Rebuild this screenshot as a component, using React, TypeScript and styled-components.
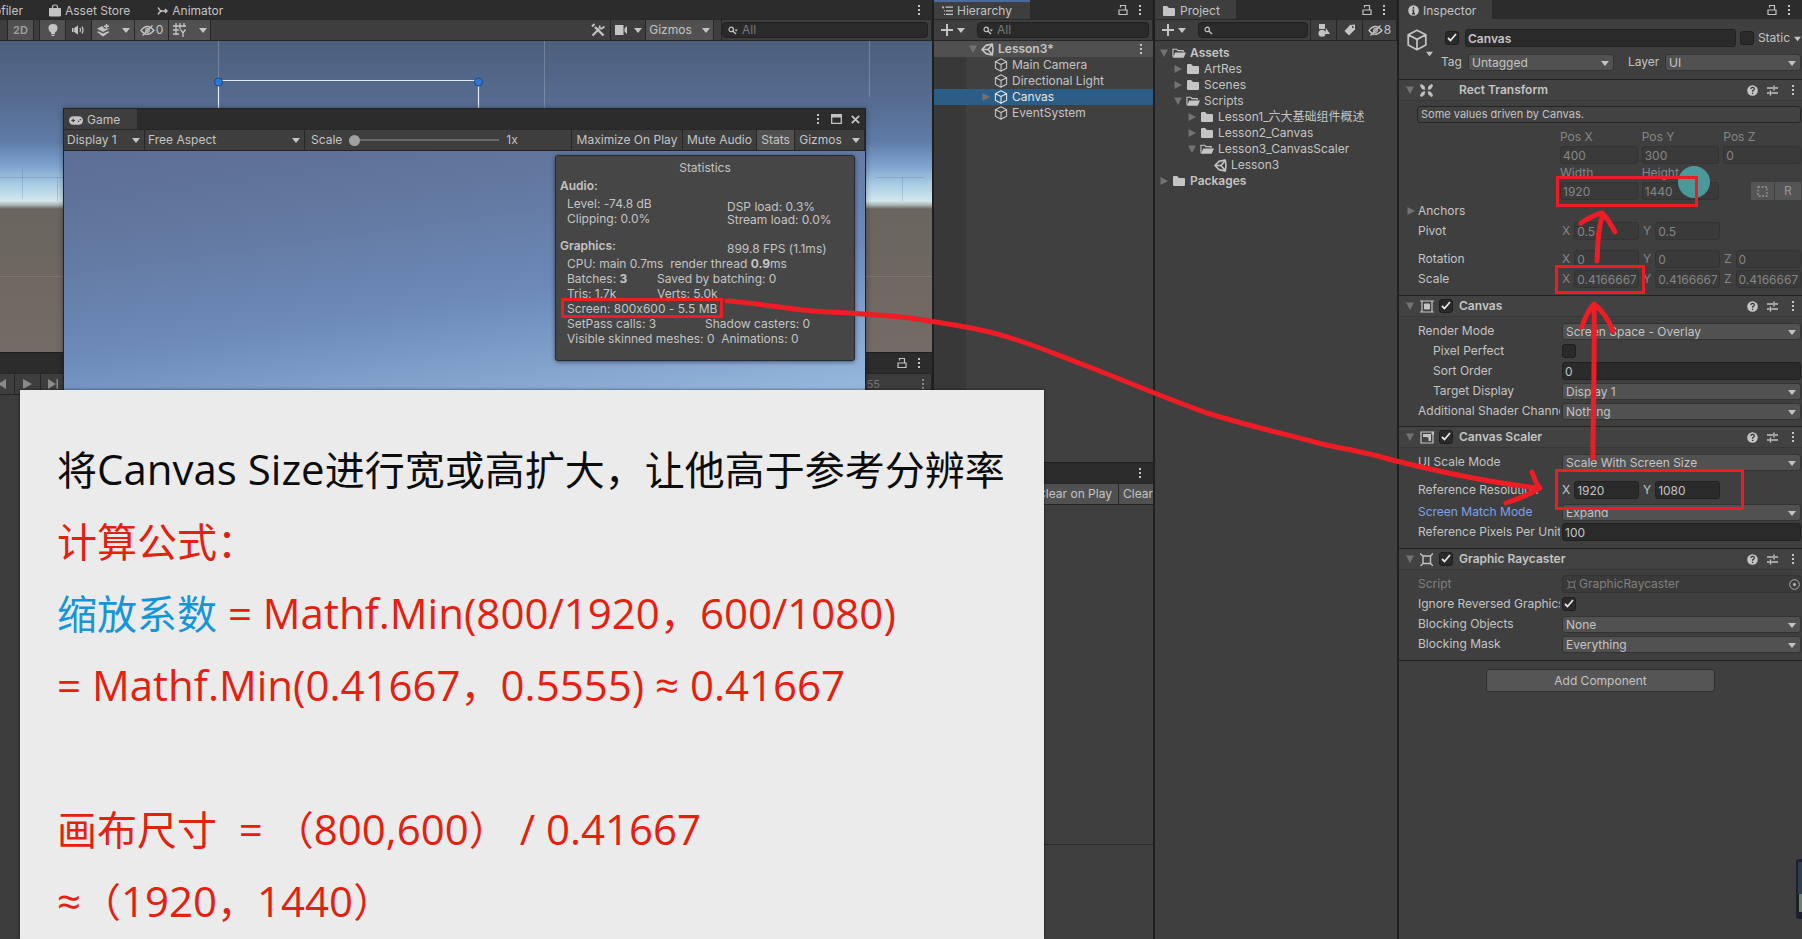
import React, { useId } from 'react';
import styled, { createGlobalStyle, css } from 'styled-components';

const GlobalStyle = createGlobalStyle`
  * { box-sizing: border-box; }
  body { margin: 0; background: #1f1f1f; }
  body, button, input, select {
    font-family: Inter, "Noto Sans CJK SC", sans-serif;
    font-size: 12px;
    line-height: 16px;
    font-feature-settings: "calt" 0;
    color: #c4c4c4;
  }
  button, input, select { margin: 0; padding: 0; border: 0; border-radius: 0; background: none; min-width: 0; }
`;

/* ---------- Icons ---------- */

const Svg = styled.svg`
  display: block;
  flex: none;
  fill: none;
  stroke: currentColor;
`;

const Caret = ({ size = 8 }: { size?: number }) => (
  <Svg width={size} height={size} viewBox="0 0 8 8" aria-hidden><path d="M0 2h8L4 7z" fill="currentColor" stroke="none" /></Svg>
);
const Kebab = () => (
  <Svg width="4" height="12" viewBox="0 0 4 12" aria-hidden>
    <path d="M1 1h2v2H1zM1 5h2v2H1zM1 9h2v2H1z" fill="currentColor" stroke="none" />
  </Svg>
);
const Lock = () => (
  <Svg width="10" height="12" viewBox="0 0 10 12" aria-hidden>
    <path d="M1 6h8v4.500H1zM2.500 3.500V1.500h5V6" strokeWidth="1.200" />
  </Svg>
);
const Cube = ({ size = 14 }: { size?: number }) => (
  <Svg width={size} height={size} viewBox="0 0 14 14" aria-hidden>
    <path d="M7 .8l5.6 2.9v6.5L7 13.2l-5.6-3V3.7zM1.4 3.7L7 6.6l5.6-2.9M7 6.6v6.6" strokeWidth="1.1" strokeLinejoin="round" />
  </Svg>
);
const UnityMark = () => (
  <Svg width="13" height="13" viewBox="0 0 13 13" aria-hidden>
    <path d="M11.3 1L5 2.4 1 6.5l4 4.1L11.3 12l.7-5.5zM7 6.5L10.8 2M7 6.5l3.8 4.5M7 6.5H1.6" strokeWidth="1.6" strokeLinejoin="round" />
  </Svg>
);
const Folder = () => (
  <Svg width="14" height="12" viewBox="0 0 14 12" aria-hidden>
    <path d="M1 2q0-1 1-1h3l2 2h5q1 0 1 1v6q0 1-1 1H2q-1 0-1-1z" fill="currentColor" stroke="none" />
  </Svg>
);
const FolderOpen = () => (
  <Svg width="14" height="12" viewBox="0 0 15 12" aria-hidden>
    <path d="M1 10V2h4l1.500 1.500H12V5" strokeWidth="1.200" />
    <path d="M3.500 5.500H15L12.500 11H.800z" fill="currentColor" stroke="none" />
  </Svg>
);
const Fold = ({ open }: { open: boolean }) => (
  <Svg width="8" height="8" viewBox="0 0 8 8" aria-hidden>
    <path d={open ? 'M0 .5h8L4 8z' : 'M.5 0v8L8 4z'} fill="#727272" stroke="none" />
  </Svg>
);
const Magnifier = ({ menu }: { menu?: boolean }) => (
  <Svg width="10" height="9" viewBox="0 0 10 9" aria-hidden>
    <circle cx="3.200" cy="3.400" r="2.200" strokeWidth="1.200" />
    <path d="M4.800 5L8 8" strokeWidth="1.400" />
    {menu && <path d="M6.500 3.500H10L8.200 5.600z" fill="currentColor" stroke="none" />}
  </Svg>
);
const Plus = () => (
  <Svg width="12" height="12" viewBox="0 0 12 12" aria-hidden><path d="M6 0v12M0 6h12" strokeWidth="2" /></Svg>
);
const Bag = () => (
  <Svg width="12" height="13" viewBox="0 0 12 13" aria-hidden>
    <path d="M.5 4.500h11V12H.500z" fill="currentColor" />
    <path d="M3.500 6V3q0-2 2.500-2t2.500 2v3" strokeWidth="1.200" />
  </Svg>
);
const AnimatorMark = () => (
  <Svg width="11" height="10" viewBox="0 0 11 10" aria-hidden>
    <path d="M1 1.500Q3 5 5 5h5M1 8.500Q3 5 5 5M8 3l2 2-2 2" strokeWidth="1.400" />
  </Svg>
);
const Bulb = () => (
  <Svg width="10" height="13" viewBox="0 0 10 13" aria-hidden>
    <path d="M5 0q4.500 0 4.500 4.200Q9.500 7 7 8.500V10H3V8.500Q.500 7 .500 4.200.500 0 5 0zM3.500 10.800h3V12h-3z" fill="currentColor" stroke="none" />
  </Svg>
);
const Speaker = () => (
  <Svg width="13" height="10" viewBox="0 0 13 10" aria-hidden>
    <path d="M0 3h1.500v4H0zM2.200 3L6 .500v9L2.200 7z" fill="currentColor" stroke="none" />
    <path d="M8 3q1 2 0 4M10 1.500q2 3.500 0 7" strokeWidth="1.200" />
  </Svg>
);
const Layers = () => (
  <Svg width="13" height="13" viewBox="0 0 13 13" aria-hidden>
    <path d="M0 4.500l5.500-2.500L7 4.500h5.500L6 8zM0 8l1.500-.800L6 9.500l5-2.300 1.500.800L6 12.500z" fill="currentColor" stroke="none" />
    <path d="M9.500 0v4.500M7 2.200h5" strokeWidth="1.400" />
  </Svg>
);
const EyeOff = () => (
  <Svg width="15" height="11" viewBox="0 0 15 11" aria-hidden>
    <path d="M1 5.500q6-8 13 0-7 7.500-13 0zM2.500 10.500l10-10" strokeWidth="1.300" />
    <circle cx="7.500" cy="5.500" r="1.800" strokeWidth="1.200" />
  </Svg>
);
const GridY = () => (
  <Svg width="14" height="14" viewBox="0 0 14 14" aria-hidden>
    <path d="M3 0v12M7 0v6M11 0v4M0 3h13M0 7h6M0 11h6M7.500 6.500l2.500 3.500 2.500-3.500M10 10v4" strokeWidth="1.300" />
  </Svg>
);
const Tools = () => (
  <Svg width="14" height="14" viewBox="0 0 14 14" aria-hidden>
    <path d="M4 4l8.500 8.500" strokeWidth="2.400" />
    <path d="M1 3.500L3.500 1M1.500 12.500L8 6" strokeWidth="2" />
    <path d="M9 2.500Q7.500 6 11 5.500l2.500-2" strokeWidth="1.800" />
  </Svg>
);
const Camera = () => (
  <Svg width="13" height="10" viewBox="0 0 13 10" aria-hidden>
    <path d="M0 0h8.500v10H0zM9.500 3.500L12 1v8L9.500 6.500z" fill="currentColor" stroke="none" />
  </Svg>
);
const Gamepad = () => (
  <Svg width="14" height="9" viewBox="0 0 15 9" aria-hidden>
    <rect x="0" y="0" width="15" height="9" rx="4.500" fill="currentColor" stroke="none" />
    <path d="M2.500 4.500h4M4.500 2.500v4M9.500 5.500h1.500M11.500 3.500H13" stroke="#3c3c3c" strokeWidth="1.300" />
  </Svg>
);
const ListMark = () => (
  <Svg width="11" height="10" viewBox="0 0 11 10" aria-hidden>
    <path d="M0 1.200h2M3.500 1.200H11M4 4.800h7M4 8.400h7M2 4.800h1M2 8.400h1M1.200 1v1.500" strokeWidth="1.200" />
  </Svg>
);
const Shapes = () => (
  <Svg width="12" height="13" viewBox="0 0 12 13" aria-hidden>
    <path d="M1 0h6v5H1zM8 4l4 6H7z" fill="currentColor" stroke="none" />
    <circle cx="4" cy="9.200" r="3.500" fill="currentColor" stroke="none" />
  </Svg>
);
const TagMark = () => (
  <Svg width="12" height="12" viewBox="0 0 12 12" aria-hidden>
    <path d="M6 1l5-.500v5L5 11.500.500 7z" fill="currentColor" stroke="none" />
    <circle cx="8.800" cy="3" r="1" fill="#3c3c3c" stroke="none" />
  </Svg>
);
const Info = () => (
  <Svg width="11" height="11" viewBox="0 0 11 11" aria-hidden>
    <circle cx="5.500" cy="5.500" r="5.300" fill="currentColor" stroke="none" />
    <path d="M5.500 2v1.700M5.500 4.600V9M4.300 5.100h1.500M4 8.800h3" stroke="#333" strokeWidth="1.400" />
  </Svg>
);
const Help = () => (
  <Svg width="11" height="11" viewBox="0 0 11 11" aria-hidden>
    <circle cx="5.500" cy="5.500" r="5.300" fill="currentColor" stroke="none" />
    <path d="M3.800 4q.2-1.700 1.800-1.700T7.300 3.900q0 1-1.700 1.900v.9M5.600 7.700V9" stroke="#333" strokeWidth="1.300" />
  </Svg>
);
const Preset = () => (
  <Svg width="11" height="11" viewBox="0 0 11 11" aria-hidden>
    <path d="M0 3h6M8 3h3M0 8h2.500M4.500 8H11M7 .500v5M3.500 5.500v5" strokeWidth="1.400" />
  </Svg>
);
const RectTransformMark = () => (
  <Svg width="13" height="13" viewBox="0 0 12 12" aria-hidden>
    <path d="M1 0l.8 1.600L0 1l2 3.500 2.500.5L4 2.300zM11 0l-.8 1.600L12 1l-2 3.500L7.500 5 8 2.300zM1 12l.8-1.600L0 11l2-3.500L4.500 7 4 9.700zM11 12l-.8-1.600 1.800.6-2-3.500L7.500 7l.5 2.700z" fill="currentColor" stroke="currentColor" strokeWidth=".6" />
  </Svg>
);
const CanvasMark = () => (
  <Svg width="14" height="13" viewBox="0 0 14 13" aria-hidden>
    <path d="M0 1h14M0 12h14M2 1v11M12 1v11" strokeWidth="1.200" />
    <path d="M4.500 4h5v5h-5z" fill="currentColor" strokeWidth="1" />
  </Svg>
);
const ScalerMark = () => (
  <Svg width="14" height="13" viewBox="0 0 14 13" aria-hidden>
    <path d="M1 1h12v11H1z" strokeWidth="1.200" />
    <path d="M3 3h5v3H3zM7 3h4v7H8.500V6.500H7z" fill="currentColor" stroke="none" />
    <path d="M11 3l3-3v4z" fill="currentColor" stroke="none" />
  </Svg>
);
const RaycastMark = ({ size = 13 }: { size?: number }) => (
  <Svg width={size} height={size} viewBox="0 0 13 13" aria-hidden>
    <path d="M3 3h7.500v7.500H3zM0 .500L3 3M13 .500L10.500 3M.500 13L3 10.500M13 13l-2.500-2.500" strokeWidth="1.400" />
  </Svg>
);
const Tick = () => (
  <Svg width="10" height="9" viewBox="0 0 10 9" aria-hidden><path d="M1 5l2.500 2.500L9 1" strokeWidth="1.800" /></Svg>
);

/* ---------- Shared parts ---------- */

const IconButton = styled.button`
  display: flex;
  align-items: center;
  justify-content: center;
  gap: 2px;
  flex: none;
`;

const Strip = styled.div`
  display: flex;
  align-items: center;
  height: 19px;
  flex: none;
  background: #2c2c2c;
  overflow: hidden;
  white-space: nowrap;
`;

const TallStrip = styled(Strip)`
  height: 20px;
`;

const Tab = styled.button<{ $active?: boolean; $focus?: boolean; $width?: number; $pad?: number }>`
  display: flex;
  align-items: center;
  gap: 4px;
  height: 100%;
  flex: none;
  padding: 2px ${p => p.$pad ?? 8}px 0;
  width: ${p => (p.$width ? `${p.$width}px` : 'auto')};
  background: ${p => (p.$active ? '#3e3e3e' : 'transparent')};
  box-shadow: ${p => (p.$focus ? 'inset 0 2px #4a6b9c' : 'none')};
`;

const StripActions = styled.div`
  display: flex;
  align-items: center;
  gap: 10px;
  margin-left: auto;
  padding-right: 11px;
`;

const Toolbar = styled.div`
  display: flex;
  align-items: stretch;
  height: 22px;
  flex: none;
  background: #3e3e3e;
  border-top: 1px solid #282828;
  border-bottom: 1px solid #242424;
  white-space: nowrap;
  overflow: hidden;
`;

const ToolButton = styled.button<{ $on?: boolean; $width?: number; $gap?: number }>`
  display: flex;
  align-items: center;
  justify-content: center;
  gap: ${p => p.$gap ?? 6}px;
  flex: none;
  padding: 0 4px;
  width: ${p => (p.$width ? `${p.$width}px` : 'auto')};
  background: ${p => (p.$on ? '#515151' : '#3e3e3e')};
  border-right: 1px solid #262626;
`;

const ModeButton = styled(ToolButton)`
  font-size: 11px;
  font-weight: 600;
  color: #a0a0a0;
`;

const PreviousButton = styled(ToolButton)`
  justify-content: flex-end;
  padding-right: 8px;
`;

const ToolGap = styled.div<{ $width: number }>`
  width: ${p => p.$width}px;
  flex: none;
  border-right: 1px solid #262626;
`;

const Spacer = styled.div`
  flex: 1;
`;

const SearchBox = styled.label<{ $grow?: boolean }>`
  display: flex;
  align-items: center;
  gap: 4px;
  height: 16px;
  align-self: center;
  min-width: 0;
  flex: ${p => (p.$grow ? '1 1 0' : '0 0 206px')};
  padding: 0 5px;
  background: #2a2a2a;
  border: 1px solid #202020;
  border-radius: 4px;
  input { flex: 1; width: 20px; height: 14px; outline: none; }
  input::placeholder { color: #7a7a7a; opacity: 1; }
`;

/* ---------- Workspace ---------- */

const Workspace = styled.main`
  position: relative;
  display: grid;
  grid-template-columns: minmax(0, 1fr) 219px 242px 403px;
  column-gap: 2px;
  min-height: 100vh;
  overflow: hidden;
  background: #1f1f1f;
`;

const Column = styled.section`
  display: flex;
  flex-direction: column;
  min-width: 0;
  background: #3f3f3f;
`;

/* ---------- Scene ---------- */

const SceneTabs = styled(Strip)`
  gap: 11px;
`;

const ProfilerTab = styled(Tab)`
  width: 30px;
  padding: 2px 7px 0 0;
  justify-content: flex-end;
`;

const SceneView = styled.div`
  height: 311px;
  flex: none;
  overflow: hidden;
  background: linear-gradient(
    180deg,
    #4c5f7c 0, #566c90 60px, #5e7ba7 100px, #7ea3cf 125px, #a9cbe4 143px,
    #d2e8ec 160px, #a9b5b3 164px, #6a655f 168px, #736b66 311px
  );
`;

const SceneOverlay = styled.svg`
  display: block;
`;

const Timeline = styled.div`
  flex: 1;
  background: #3c3c3c;
  border-top: 1px solid #1e1e1e;
`;

const TransportRow = styled(Toolbar)`
  background: #3c3c3c;
  color: #8a8a8a;
  button { color: #8a8a8a; }
`;

const FrameCount = styled.span`
  align-self: center;
  font-size: 11px;
  line-height: 12px;
  margin-right: 41px;
  color: #747474;
`;

const ScenePanel = () => (
  <Column aria-label="Scene">
    <SceneTabs>
      <ProfilerTab>Profiler</ProfilerTab>
      <Tab><Bag />Asset Store</Tab>
      <Tab><AnimatorMark />Animator</Tab>
      <StripActions><IconButton aria-label="Scene menu"><Kebab /></IconButton></StripActions>
    </SceneTabs>
    <Toolbar>
      <ToolGap $width={8} />
      <ModeButton $on $width={26}>2D</ModeButton>
      <ToolGap $width={6} />
      <ToolButton $on $width={26} aria-label="Lighting"><Bulb /></ToolButton>
      <ToolButton $width={26} aria-label="Audio"><Speaker /></ToolButton>
      <ToolButton $on $width={43} $gap={12} aria-label="Effects"><Layers /><Caret /></ToolButton>
      <ToolButton $on $width={34} $gap={1} aria-label="Hidden objects"><EyeOff />0</ToolButton>
      <ToolButton $on $width={42} $gap={12} aria-label="Grid"><GridY /><Caret /></ToolButton>
      <Spacer />
      <ToolButton $width={26} aria-label="Tools"><Tools /></ToolButton>
      <ToolButton $width={35} aria-label="Camera"><Camera /><Caret /></ToolButton>
      <ToolButton $on $width={68} $gap={10}>Gizmos<Caret /></ToolButton>
      <ToolGap $width={8} />
      <SearchBox><Magnifier menu /><input aria-label="Search scene" placeholder="All" /></SearchBox>
      <ToolGap $width={4} />
    </Toolbar>
    <SceneView>
      <SceneOverlay width="932" height="311" viewBox="0 0 932 311" aria-hidden>
        <path d="M218.500 0v40M544.500 0v68M869.500 0v56" stroke="#fff" strokeOpacity=".2" />
        <path d="M0 136.500h63M22.500 128v30M57.500 136v24M876 136.500h48M902.500 136v24" stroke="#3c6a8a" strokeOpacity=".22" />
        <path d="M0 235.500h63M866 235.500h66" stroke="#fff" strokeOpacity=".1" />
        <path d="M218.500 80V39.500h260V80" fill="none" stroke="#dfe8f2" strokeWidth="1.200" />
        <circle cx="218.500" cy="41" r="4" fill="#2f78d8" stroke="#1c4684" />
        <circle cx="478.500" cy="41" r="4" fill="#2f78d8" stroke="#1c4684" />
      </SceneOverlay>
    </SceneView>
    <Timeline>
      <TallStrip>
        <StripActions>
          <IconButton aria-label="Lock timeline"><Lock /></IconButton>
          <IconButton aria-label="Timeline menu"><Kebab /></IconButton>
        </StripActions>
      </TallStrip>
      <TransportRow>
        <PreviousButton $width={15} aria-label="Previous frame">
          <Svg width="8" height="10" viewBox="0 0 8 10" aria-hidden><path d="M8 0v10L0 5z" fill="currentColor" stroke="none" /></Svg>
        </PreviousButton>
        <ToolButton $width={26} aria-label="Play">
          <Svg width="9" height="10" viewBox="0 0 9 10" aria-hidden><path d="M0 0v10l9-5z" fill="currentColor" stroke="none" /></Svg>
        </ToolButton>
        <ToolButton $width={24} aria-label="Next frame">
          <Svg width="10" height="10" viewBox="0 0 10 10" aria-hidden><path d="M0 0v10l8-5zM8.500 0H10v10H8.500z" fill="currentColor" stroke="none" /></Svg>
        </ToolButton>
        <Spacer />
        <FrameCount>55</FrameCount>
        <IconButton aria-label="Track menu"><Kebab /></IconButton>
        <ToolGap $width={7} />
      </TransportRow>
    </Timeline>
  </Column>
);

/* ---------- Hierarchy and console ---------- */

const AddButton = styled(IconButton)`
  gap: 4px;
  padding: 0 12px 0 7px;
`;

const TreeRow = styled.li<{ $indent: number; $tone?: 'scene' | 'selected'; $bold?: boolean }>`
  display: flex;
  align-items: center;
  gap: 4px;
  height: 16px;
  padding-left: ${p => p.$indent}px;
  padding-right: 10px;
  white-space: nowrap;
  font-weight: ${p => (p.$bold ? 600 : 400)};
  ${p => p.$tone === 'scene' && css`background: #505050;`}
  ${p => p.$tone === 'selected' && css`background: #2c5d87; color: #e4e4e4;`}
`;

const TwistySlot = styled.span`
  display: flex;
  width: 8px;
  flex: none;
`;

const HierarchyTree = styled.ul`
  margin: 0;
  padding: 0;
  list-style: none;
  height: 421px;
  flex: none;
  background: linear-gradient(90deg, #383838 32px, #404040 32px);
`;

const ProjectTree = styled(HierarchyTree)`
  height: auto;
  padding-top: 4px;
  background: none;
`;

const Console = styled.div`
  display: flex;
  flex-direction: column;
  flex: 1;
  border-top: 1px solid #1e1e1e;
`;

const ConsoleBar = styled(Toolbar)`
  padding-left: 97px;
`;

const ConsoleLog = styled.div`
  height: 340px;
  border-bottom: 1px solid #2a2a2a;
`;

const objects = [
  { name: 'Main Camera' },
  { name: 'Directional Light' },
  { name: 'Canvas', parent: true },
  { name: 'EventSystem' },
];

const HierarchyPanel = () => (
  <Column aria-label="Hierarchy">
    <Strip>
      <Tab $active $focus $width={96}><ListMark />Hierarchy</Tab>
      <StripActions>
        <IconButton aria-label="Lock hierarchy"><Lock /></IconButton>
        <IconButton aria-label="Hierarchy menu"><Kebab /></IconButton>
      </StripActions>
    </Strip>
    <Toolbar>
      <AddButton aria-label="Create object"><Plus /><Caret /></AddButton>
      <SearchBox $grow><Magnifier menu /><input aria-label="Search hierarchy" placeholder="All" /></SearchBox>
      <ToolGap $width={4} />
    </Toolbar>
    <HierarchyTree>
      <TreeRow $indent={35} $tone="scene" $bold>
        <TwistySlot><Fold open /></TwistySlot><UnityMark />Lesson3*
        <Spacer /><Kebab />
      </TreeRow>
      {objects.map(o => (
        <TreeRow key={o.name} $indent={48} $tone={o.parent ? 'selected' : undefined}>
          <TwistySlot>{o.parent && <Fold open={false} />}</TwistySlot><Cube />{o.name}
        </TreeRow>
      ))}
    </HierarchyTree>
    <Console>
      <TallStrip><StripActions><IconButton aria-label="Console menu"><Kebab /></IconButton></StripActions></TallStrip>
      <ConsoleBar>
        <ToolButton $on $width={88}>Clear on Play</ToolButton>
        <ToolButton $on>Clear on Build</ToolButton>
      </ConsoleBar>
      <ConsoleLog />
    </Console>
  </Column>
);

/* ---------- Project ---------- */

const folders: { name: string; depth: number; open?: boolean; bold?: boolean; script?: boolean }[] = [
  { name: 'Assets', depth: 0, open: true, bold: true },
  { name: 'ArtRes', depth: 1 },
  { name: 'Scenes', depth: 1 },
  { name: 'Scripts', depth: 1, open: true },
  { name: 'Lesson1_六大基础组件概述', depth: 2 },
  { name: 'Lesson2_Canvas', depth: 2 },
  { name: 'Lesson3_CanvasScaler', depth: 2, open: true },
  { name: 'Lesson3', depth: 3, script: true },
  { name: 'Packages', depth: 0, bold: true },
];

const ProjectPanel = () => (
  <Column aria-label="Project">
    <Strip>
      <Tab $active $width={81} $pad={7}><Folder />Project</Tab>
      <StripActions>
        <IconButton aria-label="Lock project"><Lock /></IconButton>
        <IconButton aria-label="Project menu"><Kebab /></IconButton>
      </StripActions>
    </Strip>
    <Toolbar>
      <AddButton aria-label="Create asset"><Plus /><Caret /></AddButton>
      <SearchBox $grow><Magnifier /><input aria-label="Search assets" /></SearchBox>
      <ToolGap $width={3} />
      <ToolButton $width={26} aria-label="Search by type"><Shapes /></ToolButton>
      <ToolButton $width={26} aria-label="Search by label"><TagMark /></ToolButton>
      <ToolButton $width={34} $gap={1} aria-label="Hidden packages"><EyeOff />8</ToolButton>
    </Toolbar>
    <ProjectTree>
      {folders.map(f => (
        <TreeRow key={f.name} $indent={5 + f.depth * 14} $bold={f.bold}>
          <TwistySlot>{!f.script && <Fold open={!!f.open} />}</TwistySlot>
          {f.script ? <UnityMark /> : f.open ? <FolderOpen /> : <Folder />}
          {f.name}
        </TreeRow>
      ))}
    </ProjectTree>
  </Column>
);

/* ---------- Inspector ---------- */

const SelectWrap = styled.span`
  position: relative;
  display: block;
  min-width: 0;
  flex: 1;
  svg { position: absolute; right: 5px; top: 5px; pointer-events: none; }
`;

const SelectBox = styled.select`
  appearance: none;
  display: block;
  width: 100%;
  height: 17px;
  padding: 0 16px 0 3px;
  background: #515151;
  border: 1px solid #333;
  border-radius: 3px;
  line-height: 15px;
`;

const Select = ({ id, value, label }: { id?: string; value: string; label?: string }) => (
  <SelectWrap>
    <SelectBox id={id} aria-label={label} defaultValue={value}><option>{value}</option></SelectBox>
    <Caret />
  </SelectWrap>
);

const TextField = styled.input<{ $muted?: boolean; $strong?: boolean }>`
  flex: 1;
  width: 100%;
  height: 18px;
  padding: 0 2px;
  background: ${p => (p.$muted ? '#3a3a3a' : '#2a2a2a')};
  border: 1px solid ${p => (p.$muted ? '#333' : '#212121')};
  border-radius: 3px;
  color: ${p => (p.$muted ? '#868686' : '#c4c4c4')};
  font-weight: ${p => (p.$strong ? 600 : 400)};
`;

const TickWrap = styled.span`
  position: relative;
  display: block;
  width: 14px;
  height: 14px;
  flex: none;
  color: #e6e6e6;
  svg { position: absolute; left: 2px; top: 2px; pointer-events: none; }
  input {
    appearance: none;
    display: block;
    width: 14px;
    height: 14px;
    background: #2a2a2a;
    border: 1px solid #1e1e1e;
    border-radius: 3px;
  }
`;

const TickBox = ({ id, on, label }: { id?: string; on?: boolean; label?: string }) => (
  <TickWrap><input id={id} type="checkbox" defaultChecked={on} aria-label={label} />{on && <Tick />}</TickWrap>
);

const ObjectHeader = styled.div`
  display: flex;
  gap: 12px;
  height: 60px;
  flex: none;
  padding: 10px 1px 0 7px;
`;

const ObjectIcon = styled.div`
  display: flex;
  align-items: flex-start;
  width: 27px;
  height: 28px;
  flex: none;
  svg:last-child { align-self: flex-end; margin-left: -2px; }
`;

const ObjectFields = styled.div`
  display: grid;
  row-gap: 6px;
  flex: 1;
  align-content: start;
  min-width: 0;
`;

const FieldLine = styled.div`
  display: flex;
  align-items: center;
  gap: 6px;
  height: 18px;
`;

const StaticLabel = styled.label`
  display: flex;
  align-items: center;
  gap: 4px;
  margin-left: -2px;
`;

const TagLine = styled.div`
  display: grid;
  grid-template-columns: 27px 146px 51px minmax(0, 1fr);
  align-items: center;
  height: 18px;
  margin-left: -4px;
  label:nth-of-type(2) { padding-left: 14px; }
`;

const ComponentBlock = styled.section`
  border-top: 1px solid #232323;
`;

const ComponentHeader = styled.header`
  display: flex;
  align-items: center;
  height: 21px;
  padding: 0 7px 0 7px;
  background: #424242;
  border-bottom: 1px solid #383838;
`;

const MarkSlot = styled.span`
  display: flex;
  width: 20px;
  padding-left: 1px;
  flex: none;
`;

const TickSlot = styled.span`
  display: flex;
  width: 20px;
  flex: none;
`;

const ComponentTitle = styled.h3`
  margin: 0 auto 0 0;
  font-size: 12px;
  font-weight: 600;
  line-height: 16px;
`;

const HeaderActions = styled.div`
  display: flex;
  align-items: center;
  gap: 9px;
  button:last-child { padding-left: 4px; }
`;

const FoldButton = styled(IconButton)`
  width: 8px;
  margin-right: 5px;
`;

const ComponentBody = styled.div<{ $top?: number; $bottom?: number }>`
  padding: ${p => p.$top ?? 4}px 1px ${p => p.$bottom ?? 6}px 19px;
`;

const PropRow = styled.div<{ $indent?: number; $before?: number; $after?: number }>`
  display: grid;
  grid-template-columns: 142px minmax(0, 1fr);
  column-gap: 2px;
  align-items: center;
  height: 20px;
  margin-top: ${p => p.$before ?? 0}px;
  margin-bottom: ${p => p.$after ?? 0}px;
  > label, > span:first-child {
    padding-left: ${p => p.$indent ?? 0}px;
    white-space: nowrap;
    overflow: hidden;
  }
`;

const MutedLabel = styled.span`
  color: #808080;
`;

const LinkedLabel = styled.label`
  color: #7ea2e8;
`;

const Prop = ({ label, indent, children }: {
  label: string; indent?: number; children: (id: string) => React.ReactNode;
}) => {
  const id = useId();
  return (
    <PropRow $indent={indent}>
      <label htmlFor={id}>{label}</label>
      {children(id)}
    </PropRow>
  );
};

const Axes = styled.div`
  display: grid;
  grid-template-columns: repeat(3, minmax(0, 1fr));
  column-gap: 4px;
`;

const Axis = styled.label<{ $muted?: boolean }>`
  display: flex;
  align-items: center;
  gap: 4px;
  color: ${p => (p.$muted ? '#868686' : '#c4c4c4')};
`;

const AxisRow = ({ label, names, values, muted, before, after }: {
  label: string; names: string[]; values: string[]; muted?: boolean; before?: number; after?: number;
}) => (
  <PropRow $before={before} $after={after}>
    <span>{label}</span>
    <Axes>
      {names.map((n, i) => (
        <Axis key={n} $muted={muted}>{n}<TextField $muted={muted} defaultValue={values[i]} /></Axis>
      ))}
    </Axes>
  </PropRow>
);

const StackedAxes = styled(Axes)`
  padding: 0 0 0 142px;
  height: 36px;
  align-items: end;
`;

const StackedAxis = styled.label`
  display: grid;
  line-height: 18px;
  color: #868686;
`;

const RectButtons = styled.div`
  display: grid;
  grid-template-columns: 23px 26px;
  gap: 1px;
  justify-content: end;
  button { height: 18px; background: #555; color: #959595; }
`;

const HelpBox = styled.p`
  margin: 0 0 5px -1px;
  height: 17px;
  padding: 0 3px;
  border: 1px solid #262626;
  border-radius: 3px;
  background: #424242;
  font-size: 11px;
  line-height: 15px;
`;

const AnchorsRow = styled.div`
  display: flex;
  align-items: center;
  gap: 3px;
  height: 20px;
  margin: 1px 0 0 -11px;
`;

const ObjectField = styled.div`
  display: flex;
  align-items: center;
  gap: 3px;
  height: 18px;
  padding: 0 0 0 4px;
  background: #3a3a3a;
  border: 1px solid #333;
  border-radius: 3px;
  color: #808080;
  svg:last-child { margin-left: auto; color: #b0b0b0; }
`;

const AddComponent = styled.button`
  align-self: center;
  width: 229px;
  height: 23px;
  margin-top: 8px;
  background: #555;
  border: 1px solid #303030;
  border-radius: 3px;
`;

const InspectorEnd = styled.div`
  display: flex;
  flex-direction: column;
  flex: 1;
  border-top: 1px solid #232323;
`;

const Header = ({ title, mark, toggle }: { title: string; mark: React.ReactNode; toggle?: boolean }) => (
  <ComponentHeader>
    <FoldButton aria-label={`Collapse ${title}`}><Fold open /></FoldButton>
    <MarkSlot>{mark}</MarkSlot>
    <TickSlot>{toggle && <TickBox on label={`Enable ${title}`} />}</TickSlot>
    <ComponentTitle>{title}</ComponentTitle>
    <HeaderActions>
      <IconButton aria-label={`${title} help`}><Help /></IconButton>
      <IconButton aria-label={`${title} presets`}><Preset /></IconButton>
      <IconButton aria-label={`${title} menu`}><Kebab /></IconButton>
    </HeaderActions>
  </ComponentHeader>
);

const InspectorPanel = () => (
  <Column aria-label="Inspector">
    <Strip>
      <Tab $active $width={93} $pad={9}><Info />Inspector</Tab>
      <StripActions>
        <IconButton aria-label="Lock inspector"><Lock /></IconButton>
        <IconButton aria-label="Inspector menu"><Kebab /></IconButton>
      </StripActions>
    </Strip>
    <ObjectHeader>
      <ObjectIcon><Cube size={22} /><Caret size={7} /></ObjectIcon>
      <ObjectFields>
        <FieldLine>
          <TickBox on label="Active" />
          <TextField $strong defaultValue="Canvas" aria-label="Object name" />
          <StaticLabel><TickBox />Static<Caret size={7} /></StaticLabel>
        </FieldLine>
        <TagLine>
          <label htmlFor="tag">Tag</label><Select id="tag" value="Untagged" />
          <label htmlFor="layer">Layer</label><Select id="layer" value="UI" />
        </TagLine>
      </ObjectFields>
    </ObjectHeader>

    <ComponentBlock>
      <Header title="Rect Transform" mark={<RectTransformMark />} />
      <ComponentBody $top={5}>
        <HelpBox>Some values driven by Canvas.</HelpBox>
        <StackedAxes>
          <StackedAxis>Pos X<TextField $muted defaultValue="400" /></StackedAxis>
          <StackedAxis>Pos Y<TextField $muted defaultValue="300" /></StackedAxis>
          <StackedAxis>Pos Z<TextField $muted defaultValue="0" /></StackedAxis>
        </StackedAxes>
        <StackedAxes>
          <StackedAxis>Width<TextField $muted defaultValue="1920" /></StackedAxis>
          <StackedAxis>Height<TextField $muted defaultValue="1440" /></StackedAxis>
          <RectButtons>
            <IconButton aria-label="Blueprint mode">
              <Svg width="11" height="11" viewBox="0 0 11 11" aria-hidden><path d="M1 1h9v9H1z" strokeDasharray="2 1.500" strokeWidth="1.300" /></Svg>
            </IconButton>
            <IconButton>R</IconButton>
          </RectButtons>
        </StackedAxes>
        <AnchorsRow><Fold open={false} />Anchors</AnchorsRow>
        <AxisRow label="Pivot" names={['X', 'Y']} values={['0.5', '0.5']} muted />
        <AxisRow label="Rotation" names={['X', 'Y', 'Z']} values={['0', '0', '0']} muted before={8} />
        <AxisRow label="Scale" names={['X', 'Y', 'Z']} values={['0.4166667', '0.4166667', '0.4166667']} muted />
      </ComponentBody>
    </ComponentBlock>

    <ComponentBlock>
      <Header title="Canvas" mark={<CanvasMark />} toggle />
      <ComponentBody $bottom={5}>
        <Prop label="Render Mode">{id => <Select id={id} value="Screen Space - Overlay" />}</Prop>
        <Prop label="Pixel Perfect" indent={15}>{id => <TickBox id={id} />}</Prop>
        <Prop label="Sort Order" indent={15}>{id => <TextField id={id} defaultValue="0" />}</Prop>
        <Prop label="Target Display" indent={15}>{id => <Select id={id} value="Display 1" />}</Prop>
        <Prop label="Additional Shader Channels">{id => <Select id={id} value="Nothing" />}</Prop>
      </ComponentBody>
    </ComponentBlock>

    <ComponentBlock>
      <Header title="Canvas Scaler" mark={<ScalerMark />} toggle />
      <ComponentBody>
        <Prop label="UI Scale Mode">{id => <Select id={id} value="Scale With Screen Size" />}</Prop>
        <AxisRow label="Reference Resolution" names={['X', 'Y']} values={['1920', '1080']} before={8} after={2} />
        <PropRow>
          <LinkedLabel htmlFor="match-mode">Screen Match Mode</LinkedLabel>
          <Select id="match-mode" value="Expand" />
        </PropRow>
        <Prop label="Reference Pixels Per Unit">{id => <TextField id={id} defaultValue="100" />}</Prop>
      </ComponentBody>
    </ComponentBlock>

    <ComponentBlock>
      <Header title="Graphic Raycaster" mark={<RaycastMark />} toggle />
      <ComponentBody>
        <PropRow>
          <MutedLabel>Script</MutedLabel>
          <ObjectField>
            <RaycastMark size={9} />GraphicRaycaster
            <Svg width="11" height="11" viewBox="0 0 11 11" aria-hidden>
              <circle cx="5.500" cy="5.500" r="4.800" /><circle cx="5.500" cy="5.500" r="1.200" fill="currentColor" />
            </Svg>
          </ObjectField>
        </PropRow>
        <Prop label="Ignore Reversed Graphics">{id => <TickBox id={id} on />}</Prop>
        <Prop label="Blocking Objects">{id => <Select id={id} value="None" />}</Prop>
        <Prop label="Blocking Mask">{id => <Select id={id} value="Everything" />}</Prop>
      </ComponentBody>
    </ComponentBlock>

    <InspectorEnd><AddComponent>Add Component</AddComponent></InspectorEnd>
  </Column>
);

/* ---------- Floating game window ---------- */

const GameWindow = styled.section`
  position: absolute;
  left: 63px;
  top: 108px;
  width: 803px;
  height: 300px;
  display: flex;
  flex-direction: column;
  border: 1px solid #222;
  box-shadow: 0 0 6px rgba(0, 0, 0, 0.35);
`;

const GameActions = styled(StripActions)`
  gap: 9px;
  padding-right: 5px;
  button:first-child { padding-right: 2px; }
`;

const GameView = styled.div`
  position: relative;
  flex: 1;
  background: linear-gradient(172deg, #5c6e93 0, #62789f 25%, #6c89b8 55%, #9bbde2 100%);
`;

const BarSelect = styled.span<{ $width: number }>`
  position: relative;
  width: ${p => p.$width}px;
  flex: none;
  border-right: 1px solid #262626;
  select { appearance: none; width: 100%; height: 20px; padding-left: 3px; }
  svg { position: absolute; right: 4px; top: 6px; pointer-events: none; }
`;

const ScaleControl = styled.label`
  display: flex;
  align-items: center;
  gap: 7px;
  flex: 1;
  padding-left: 6px;
  input {
    appearance: none;
    width: 150px;
    height: 12px;
    background: linear-gradient(#6a6a6a, #6a6a6a) center / 100% 2px no-repeat;
  }
  input::-webkit-slider-thumb {
    appearance: none;
    width: 11px;
    height: 11px;
    border-radius: 50%;
    background: #a0a0a0;
  }
`;

const StatsPanel = styled.div`
  position: absolute;
  right: 10px;
  top: 4px;
  width: 300px;
  height: 206px;
  padding: 4px 4px 0;
  background: #464646;
  border: 1px solid #262a30;
  border-radius: 3px;
  box-shadow: 0 1px 4px rgba(0, 0, 0, 0.5);
  line-height: 15px;
  white-space: pre;
`;

const StatsTitle = styled.h2`
  margin: 0 0 3px;
  font-size: 12px;
  font-weight: 400;
  line-height: 15px;
  text-align: center;
`;

const StatsHeading = styled.h3`
  margin: 0 0 3px;
  font-size: 12px;
  font-weight: 600;
  line-height: 15px;
`;

const StatsColumns = styled.div<{ $cols: string; $gap?: number }>`
  display: grid;
  grid-template-columns: ${p => p.$cols};
  margin-bottom: ${p => p.$gap ?? 0}px;
`;

const StatsLine = styled.div`
  padding-left: 7px;
`;

const StatsSide = styled.div`
  padding-top: 4px;
  line-height: 13px;
`;

const GamePanel = () => (
  <GameWindow aria-label="Game">
    <TallStrip>
      <Tab $active $width={73} $pad={5}><Gamepad />Game</Tab>
      <GameActions>
        <IconButton aria-label="Game menu"><Kebab /></IconButton>
        <IconButton aria-label="Maximize">
          <Svg width="11" height="10" viewBox="0 0 11 10" aria-hidden><path d="M.700 1h9.600v8.300H.700z" strokeWidth="1.300" /><path d="M0 0h11v3.500H0z" fill="currentColor" stroke="none" /></Svg>
        </IconButton>
        <IconButton aria-label="Close">
          <Svg width="9" height="9" viewBox="0 0 9 9" aria-hidden><path d="M.800.800l7.400 7.400M8.200.800L.800 8.200" strokeWidth="1.800" /></Svg>
        </IconButton>
      </GameActions>
    </TallStrip>
    <Toolbar>
      <BarSelect $width={81}><select aria-label="Display" defaultValue="Display 1"><option>Display 1</option></select><Caret /></BarSelect>
      <BarSelect $width={160}><select aria-label="Aspect" defaultValue="Free Aspect"><option>Free Aspect</option></select><Caret /></BarSelect>
      <ScaleControl>Scale<input type="range" min="1" max="5" defaultValue="1" />1x</ScaleControl>
      <ToolGap $width={1} />
      <ToolButton $width={111}>Maximize On Play</ToolButton>
      <ToolButton $width={74}>Mute Audio</ToolButton>
      <ToolButton $on $width={38}>Stats</ToolButton>
      <ToolButton $width={70} $gap={10}>Gizmos<Caret /></ToolButton>
    </Toolbar>
    <GameView>
      <StatsPanel>
        <StatsTitle>Statistics</StatsTitle>
        <StatsHeading>Audio:</StatsHeading>
        <StatsColumns $cols="167px 1fr" $gap={12}>
          <StatsLine>{'Level: -74.8 dB\nClipping: 0.0%'}</StatsLine>
          <StatsSide>{'DSP load: 0.3%\nStream load: 0.0%'}</StatsSide>
        </StatsColumns>
        <StatsColumns $cols="167px 1fr">
          <StatsHeading>Graphics:</StatsHeading>
          <StatsSide>899.8 FPS (1.1ms)</StatsSide>
        </StatsColumns>
        <StatsLine>CPU: main 0.7ms  render thread <b>0.9</b>ms</StatsLine>
        <StatsColumns $cols="97px 1fr">
          <StatsLine>Batches: <b>3</b></StatsLine><span>Saved by batching: 0</span>
          <StatsLine>Tris: 1.7k</StatsLine><span>Verts: 5.0k</span>
        </StatsColumns>
        <StatsLine>Screen: 800x600 - 5.5 MB</StatsLine>
        <StatsColumns $cols="145px 1fr">
          <StatsLine>SetPass calls: 3</StatsLine><span>Shadow casters: 0</span>
        </StatsColumns>
        <StatsLine>Visible skinned meshes: 0  Animations: 0</StatsLine>
      </StatsPanel>
    </GameView>
  </GameWindow>
);

/* ---------- Lecture note and pen marks ---------- */

const Note = styled.article`
  position: absolute;
  left: 20px;
  top: 390px;
  bottom: 0;
  width: 1024px;
  padding: 42px 20px 0 37px;
  background: #ebebeb;
  box-shadow: 0 0 3px rgba(0, 0, 0, 0.6);
  overflow: hidden;
  font-family: "Noto Sans CJK SC", sans-serif;
  font-size: 40px;
  color: #e3210f;
  white-space: pre;
`;

const NoteLine = styled.p<{ $dark?: boolean }>`
  margin: 0;
  height: 72px;
  line-height: 72px;
  color: ${p => (p.$dark ? '#0c0c0c' : 'inherit')};
`;

const Term = styled.span`
  color: #1296d8;
`;

const Latin = styled.span`
  font-family: "Open Sans", "Noto Sans", sans-serif;
  font-size: 42px;
  line-height: 40px;
`;

const PenLayer = styled.svg`
  position: absolute;
  left: 0;
  top: 0;
  pointer-events: none;
  fill: none;
  stroke: #ee1c24;
`;

const App = () => (
  <>
    <GlobalStyle />
    <Workspace lang="zh-CN">
      <ScenePanel />
      <HierarchyPanel />
      <ProjectPanel />
      <InspectorPanel />
      <GamePanel />
      <Note>
        <NoteLine $dark>将<Latin>Canvas Size</Latin>进行宽或高扩大，让他高于参考分辨率</NoteLine>
        <NoteLine>计算公式：</NoteLine>
        <NoteLine><Term>缩放系数</Term><Latin> = Mathf.Min(800/1920</Latin>，<Latin>600/1080)</Latin></NoteLine>
        <NoteLine><Latin>= Mathf.Min(0.41667</Latin>，<Latin>0.5555) ≈ 0.41667</Latin></NoteLine>
        <NoteLine />
        <NoteLine>画布尺寸<Latin>{'  = '}</Latin>（<Latin>800,600</Latin>）<Latin> / 0.41667</Latin></NoteLine>
        <NoteLine><Latin>≈</Latin>（<Latin>1920</Latin>，<Latin>1440</Latin>）</NoteLine>
      </Note>
      <PenLayer width="1802" height="939" viewBox="0 0 1802 939" aria-hidden>
        <circle cx="1694" cy="182" r="16" fill="#4da9ab" fillOpacity=".85" stroke="none" />
        <g strokeWidth="3">
          <path d="M562.500 299.500h159v17h-159z" />
          <path d="M1557.500 177.500h139v28h-139z" />
          <path d="M1556.500 266.500h87v26h-87z" />
          <path d="M1556.500 470.500h186v38h-186z" />
        </g>
        <g strokeWidth="5" strokeLinecap="round" strokeLinejoin="round">
          <path d="M727 301C760 303 785 309 812 311C850 313 885 315 910 318C950 324 985 329 1017 340C1045 349 1065 358 1092 368C1130 383 1165 398 1207 413C1245 425 1285 434 1322 444C1350 450 1370 453 1392 460C1440 472 1490 483 1540 488M1532 472Q1536 484 1540 488Q1527 496 1506 503" />
          <path d="M1593 458C1593 410 1595 350 1594 305M1582 327Q1587 311 1594 304Q1606 313 1613 331" />
          <path d="M1597 261C1598 242 1598 228 1603 214M1581 223Q1593 215 1602 213Q1609 220 1615 232" />
        </g>
        <g stroke="none">
          <rect x="1796" y="859" width="10" height="60" rx="3" fill="#1c2029" />
          <rect x="1798" y="862" width="4" height="32" fill="#343a50" />
          <rect x="1799" y="894" width="3" height="18" fill="#5d8a62" />
        </g>
      </PenLayer>
    </Workspace>
  </>
);

export default App;
